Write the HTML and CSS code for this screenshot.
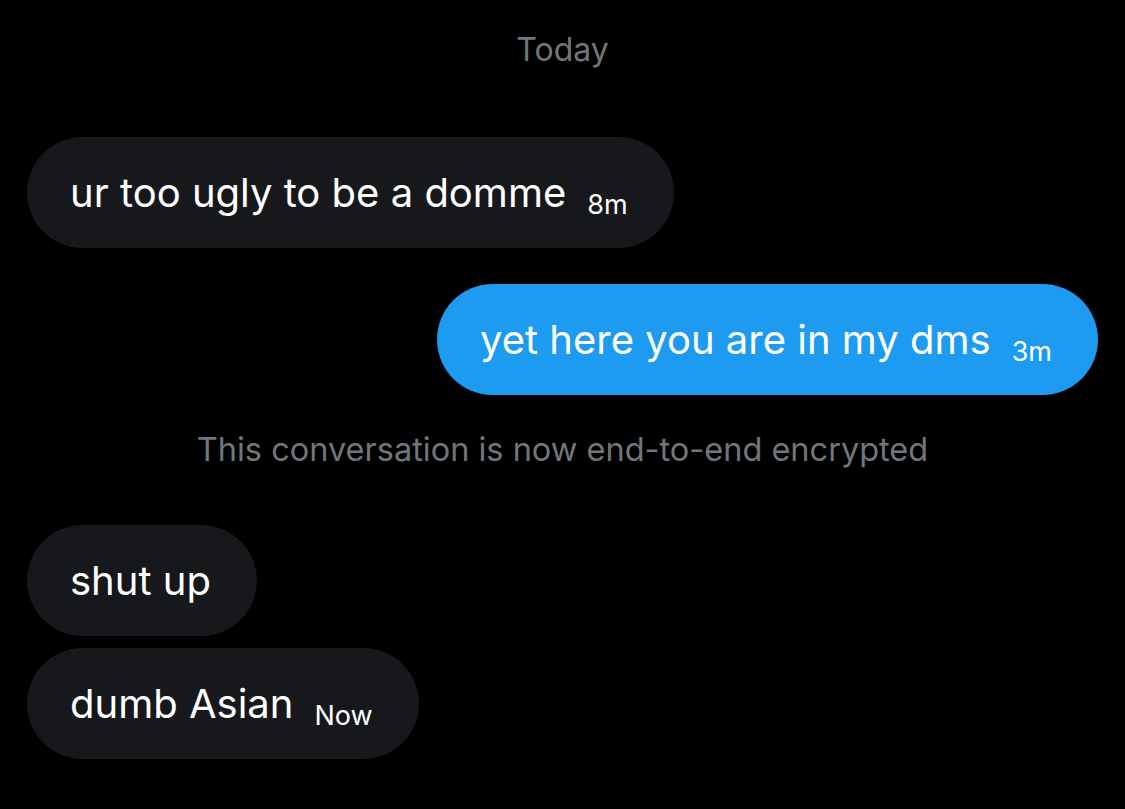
FILE: index.html
```html
<!DOCTYPE html>
<html>
<head>
<meta charset="utf-8">
<link rel="stylesheet" href="styles.css">
</head>
<body>
<div class="chat">
  <div class="day">Today</div>
  <div class="bubble in first"><div class="line"><span class="msg">ur too ugly to be a domme</span><span class="time">8m</span></div></div>
  <div class="bubble out"><div class="line"><span class="msg">yet here you are in my dms</span><span class="time">3m</span></div></div>
  <div class="notice">This conversation is now end-to-end encrypted</div>
  <div class="bubble in after-notice"><div class="line"><span class="msg">shut up</span></div></div>
  <div class="bubble in grouped"><div class="line"><span class="msg">dumb Asian</span><span class="time">Now</span></div></div>
</div>
</body>
</html>
```
FILE: styles.css
```css
html, body {
  margin: 0;
  padding: 0;
  background: #000;
  height: 100%;
}
body {
  font-family: Inter, "Noto Sans", sans-serif;
  color: #e7e9ea;
}
.chat {
  display: flex;
  flex-direction: column;
  padding: 0 27px;
}
.day {
  margin-top: 33px;
  text-align: center;
  font-size: 32px;
  line-height: 34px;
  color: #71767b;
}
.notice {
  margin-top: 38px;
  text-align: center;
  font-size: 32.5px;
  line-height: 34px;
  color: #71767b;
}
.bubble {
  display: flex;
  align-items: center;
  height: 111px;
  box-sizing: border-box;
  border-radius: 56px;
  padding: 0 46px 0 43px;
}
.line {
  display: flex;
  align-items: baseline;
}
.in {
  align-self: flex-start;
  background: #16181c;
}
.out {
  align-self: flex-end;
  background: #1d9bf0;
  margin-top: 36px;
}
.first { margin-top: 70px; }
.after-notice { margin-top: 58px; }
.grouped { margin-top: 12px; }
.msg {
  font-size: 40px;
  color: #fff;
}
.time {
  font-size: 27px;
  color: #fff;
  margin-left: 21px;
  position: relative;
  top: 7px;
}
```
